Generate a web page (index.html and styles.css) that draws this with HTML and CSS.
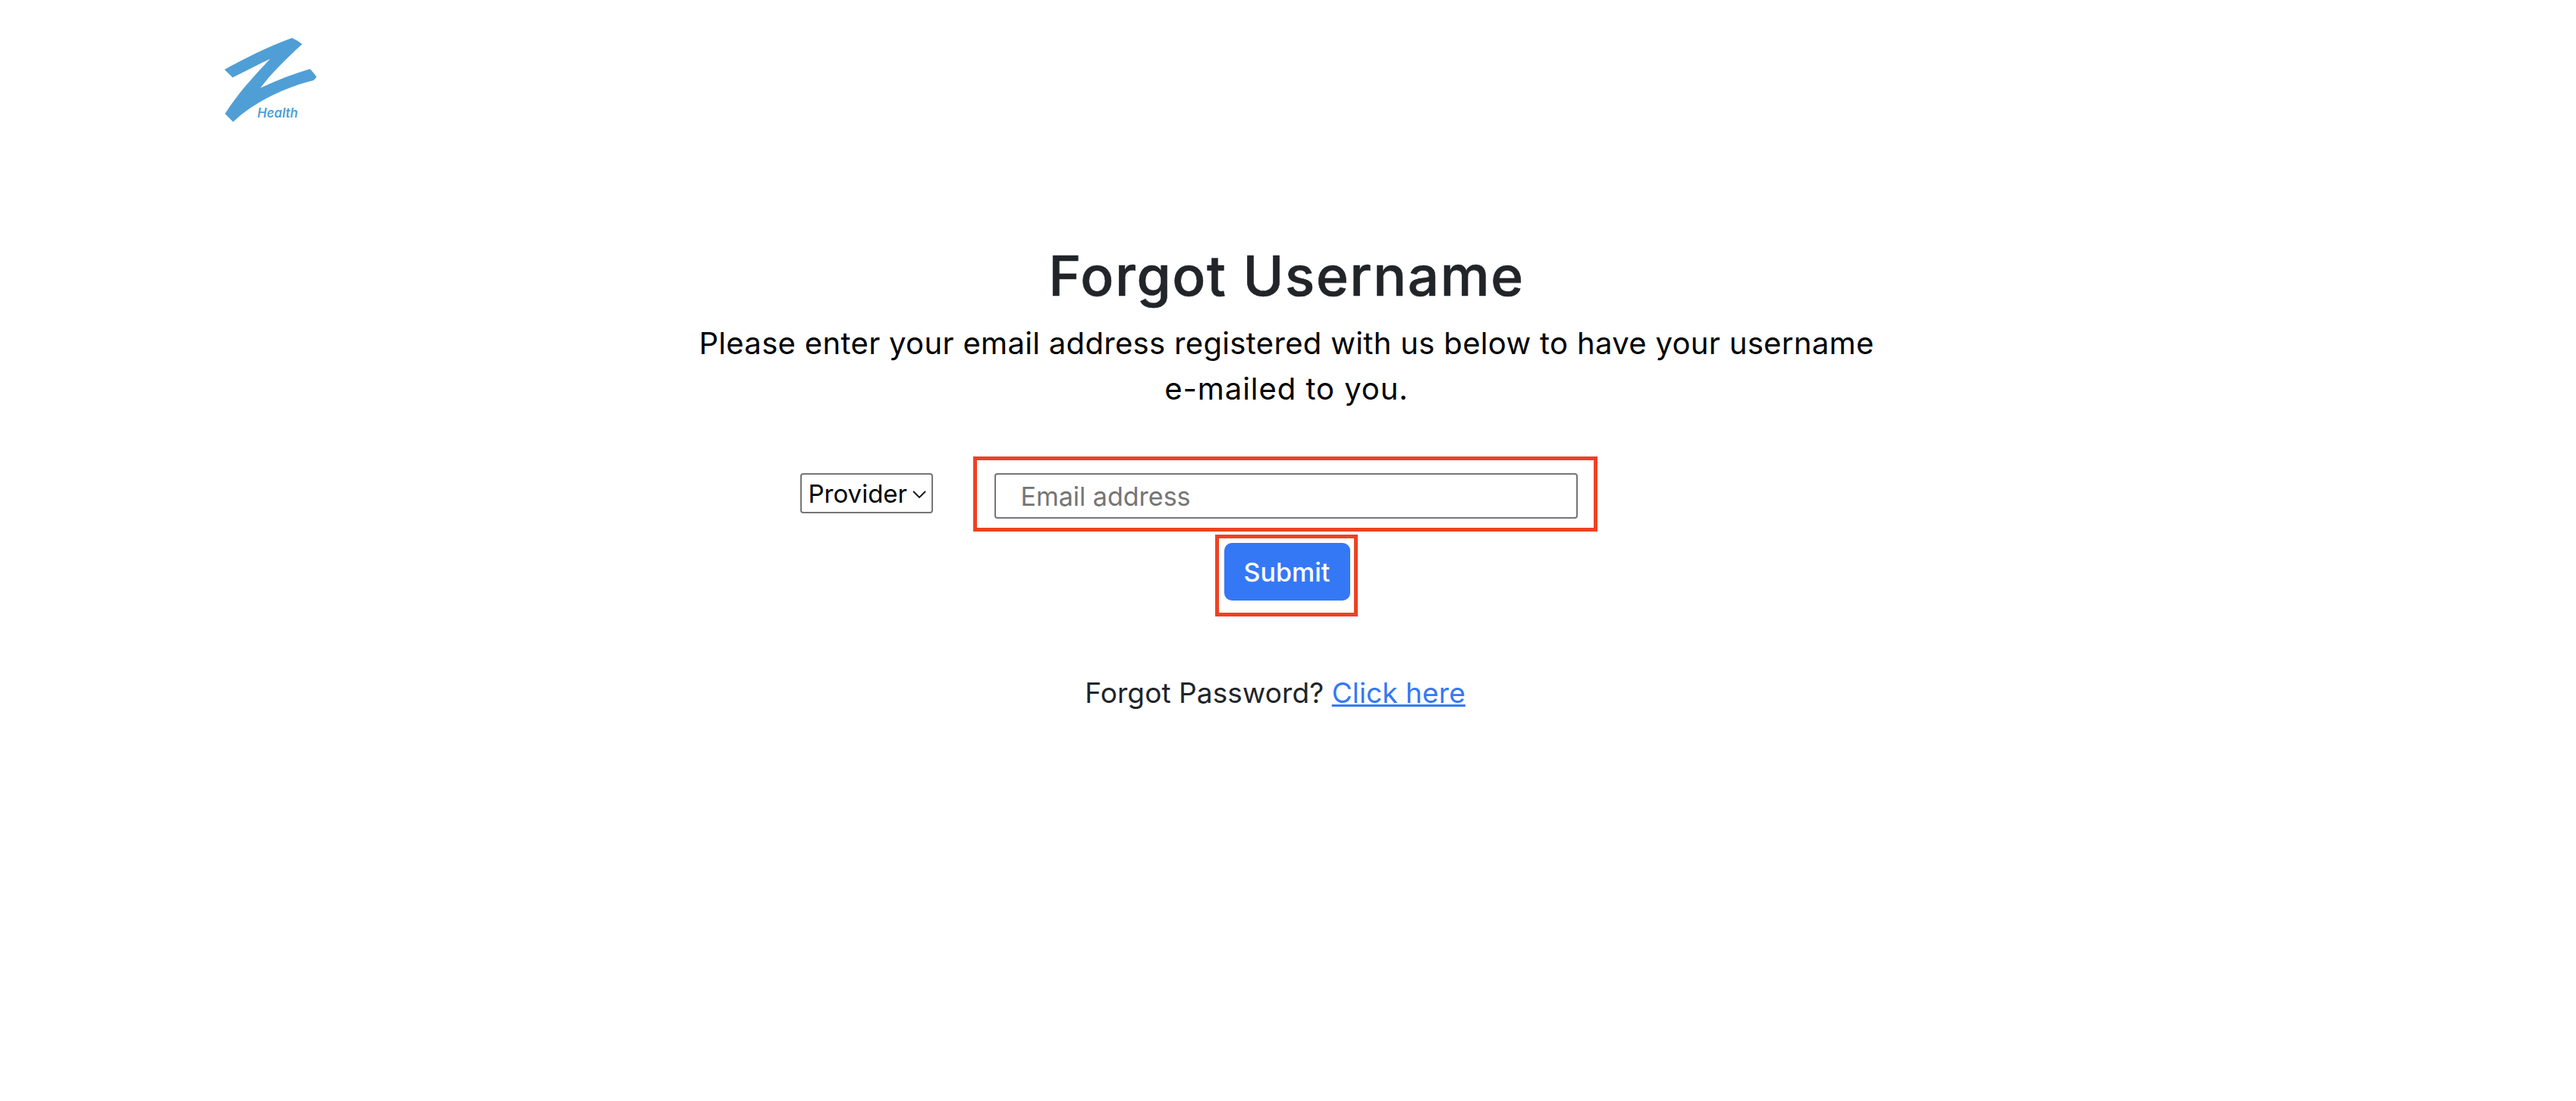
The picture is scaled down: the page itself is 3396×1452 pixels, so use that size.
FILE: index.html
```html
<!DOCTYPE html>
<html lang="en">
<head>
<meta charset="utf-8">
<title>Forgot Username</title>
<link rel="stylesheet" href="styles.css">
</head>
<body>
<header class="top">
  <svg class="logo" viewBox="0 0 510 420" width="170" height="140" role="img" aria-label="Z Health">
    <path fill="#4f9fd6" d="M78 185C160 140 250 95 345 60C358 66 372 74 385 85C320 145 268 195 220 258C285 228 350 202 415 183C425 192 435 203 442 215L430 228C320 255 200 310 112 392L80 360C130 280 195 210 258 143C210 165 160 192 110 217Z"/>
    <text x="208" y="376" class="logo-text">Health</text>
  </svg>
</header>
<main class="content">
  <h1 class="title">Forgot Username</h1>
  <p class="intro">Please enter your email address registered with us below to have your username<br><span class="intro-end">e-mailed to you.</span></p>
  <form class="form">
    <div class="form-row">
      <select class="role"><option>Provider</option><option>Member</option></select>
      <div class="mark mark-input">
        <input class="email" type="email" placeholder="Email address">
      </div>
    </div>
    <div class="mark mark-button">
      <button class="submit" type="button">Submit</button>
    </div>
  </form>
  <p class="alt">Forgot Password? <a href="#">Click here</a></p>
</main>
</body>
</html>
```
FILE: styles.css
```css
* { box-sizing: border-box; }
html, body { margin: 0; background: #fff; }
body { min-height: 1452px; font-family: Inter, "Noto Sans", sans-serif; color: #212529; }
.top { padding: 30px 0 0 270px; height: 170px; }
.logo { display: block; }
.logo-text { font: italic 600 50px Inter, sans-serif; fill: #4f9fd6; }
.content { display: flex; flex-direction: column; align-items: center; padding: 150px 4px 0 0; }
.title { margin: 0; font-size: 73px; font-weight: 500; line-height: 88px; letter-spacing: 1.6px; color: #212529; -webkit-text-stroke: 0.6px #212529; }
.intro { margin: 15px 0 0; font-size: 40px; line-height: 60px; letter-spacing: 0.33px; text-align: center; color: #000; white-space: nowrap; }
.intro-end { letter-spacing: 0.95px; }
.form { display: flex; flex-direction: column; align-items: center; margin: 59px 4px 0 0; }
.form-row { display: grid; grid-template-columns: 1fr auto 1fr; width: 2000px; align-items: start; }
.role { grid-column: 1; justify-self: end; width: 175px; height: 53px; margin: 22px 53px 0 0; padding: 0 30px 0 9px; font: 33px Inter, sans-serif; color: #000; appearance: none; background: #fff url("data:image/svg+xml,%3Csvg xmlns='http://www.w3.org/2000/svg' width='18' height='11'%3E%3Cpath d='M1 1l8 8 8-8' fill='none' stroke='%23111' stroke-width='1.8'/%3E%3C/svg%3E") no-repeat right 7px top 21px; border: 2px solid #767676; border-radius: 4px; }
.mark { border: 5px solid #ef4123; display: flex; }
.mark-input { grid-column: 2; width: 823px; height: 99px; padding: 17px 21px 0 23px; align-items: flex-start; }
.email { width: 100%; height: 60px; padding: 0 33px; font: 34px Inter, sans-serif; color: #000; background: #fff; border: 2px solid #767676; border-radius: 4px; outline: 0; }
.email::placeholder { color: #757575; opacity: 1; }
.mark-button { width: 188px; height: 108px; margin: 4px 0 0 3px; padding: 6px 5px 0 7px; align-items: flex-start; }
.submit { width: 166px; height: 76px; padding: 0; font: 500 34px Inter, sans-serif; color: #fff; background: #3578f6; border: 0; border-radius: 10px; }
.alt { margin: 72px 30px 0 0; font-size: 37px; line-height: 57px; letter-spacing: 0.1px; color: #212529; }
.alt a { color: #3578f6; }
```
